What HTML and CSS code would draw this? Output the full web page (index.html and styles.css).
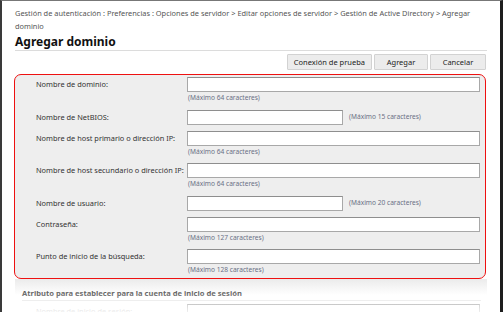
FILE: index.html
```html
<!DOCTYPE html>
<html lang="es">
<head>
  <meta charset="UTF-8">
  <title>Agregar dominio</title>
  <link rel="stylesheet" href="styles.css">
</head>
<body>
  <div class="window">
    <div class="page">
      <div class="breadcrumb">Gestión de autenticación : Preferencias : Opciones de servidor &gt; Editar opciones de servidor &gt; Gestión de Active Directory &gt; Agregar dominio</div>
      <h1 class="title">Agregar dominio</h1>

      <div class="actions">
        <button class="btn">Conexión de prueba</button>
        <button class="btn btn-add">Agregar</button>
        <button class="btn btn-cancel">Cancelar</button>
      </div>

      <!-- Domain settings -->
      <div class="panel">
        <div class="row">
          <label class="label">Nombre de dominio:</label>
          <div class="field">
            <input class="input wide" type="text">
            <div class="hint">(Máximo 64 caracteres)</div>
          </div>
        </div>
        <div class="row">
          <label class="label">Nombre de NetBIOS:</label>
          <div class="field inline">
            <input class="input short" type="text">
            <div class="hint">(Máximo 15 caracteres)</div>
          </div>
        </div>
        <div class="row">
          <label class="label">Nombre de host primario o dirección IP:</label>
          <div class="field">
            <input class="input wide" type="text">
            <div class="hint">(Máximo 64 caracteres)</div>
          </div>
        </div>
        <div class="row">
          <label class="label">Nombre de host secundario o dirección IP:</label>
          <div class="field">
            <input class="input wide" type="text">
            <div class="hint">(Máximo 64 caracteres)</div>
          </div>
        </div>
        <div class="row">
          <label class="label">Nombre de usuario:</label>
          <div class="field inline">
            <input class="input short" type="text">
            <div class="hint">(Máximo 20 caracteres)</div>
          </div>
        </div>
        <div class="row">
          <label class="label">Contraseña:</label>
          <div class="field">
            <input class="input wide" type="password">
            <div class="hint">(Máximo 127 caracteres)</div>
          </div>
        </div>
        <div class="row">
          <label class="label">Punto de inicio de la búsqueda:</label>
          <div class="field">
            <input class="input wide" type="text">
            <div class="hint">(Máximo 128 caracteres)</div>
          </div>
        </div>
      </div>

      <div class="section">
        <h2 class="section-title">Atributo para establecer para la cuenta de inicio de sesión</h2>
        <div class="row row-next">
          <label class="label">Nombre de inicio de sesión:</label>
          <div class="field">
            <input class="input wide" type="text">
          </div>
        </div>
      </div>
    </div>
    <div class="fade"></div>
  </div>
</body>
</html>
```

FILE: styles.css
```css
body {
  margin: 0;
  padding: 0;
  background-color: #fff;
  font-family: "Noto Sans", "Open Sans", sans-serif;
  color: #333;
}

.window {
  position: relative;
  width: 503px;
  height: 312px;
  box-sizing: border-box;
  border-top: 1px solid #777;
  border-left: 2px solid #3a3a3a;
  border-right: 3px solid #1e1e1e;
  overflow: hidden;
  background-color: #fff;
}

.page {
  width: 472px;
  padding: 6px 0 0 13px;
}

.breadcrumb {
  font-size: 7.4px;
  line-height: 13px;
  color: #555;
  padding-right: 10px;
}

.title {
  margin: 0;
  font-size: 12px;
  line-height: 17px;
  font-weight: bold;
  color: #111;
  border-bottom: 1px solid #dcdcdc;
}

.actions {
  display: flex;
  justify-content: flex-end;
  gap: 2px;
  margin-top: 3px;
  padding-right: 1px;
}

.btn {
  height: 16px;
  padding: 0 6px;
  background-color: #ececec;
  border: 1px solid #d2d2d2;
  border-radius: 1px;
  font-family: "Noto Sans", "Open Sans", sans-serif;
  font-size: 7.5px;
  color: #222;
}

.btn-add {
  width: 54px;
}

.btn-cancel {
  width: 56px;
}

.panel {
  margin: 4px 0 0 -1px;
  width: 470px;
  padding: 2px 0 0;
  background-color: #eeeeee;
  border: 1.5px solid #ee1111;
  border-radius: 7px;
}

.row {
  display: flex;
  align-items: flex-start;
  padding: 0 0 6px 21px;
}

.panel .row:last-child {
  padding-bottom: 2px;
}

.label {
  width: 151px;
  font-size: 7.4px;
  line-height: 15px;
  color: #333;
}

.field {
  display: flex;
  flex-direction: column;
}

.field.inline {
  flex-direction: row;
  align-items: center;
  gap: 5px;
}

.input {
  height: 15px;
  box-sizing: border-box;
  margin: 0;
  border: 1px solid #a8a8a8;
  border-top-color: #8e8e8e;
  background-color: #fff;
}

.wide {
  width: 293px;
}

.short {
  width: 156px;
}

.hint {
  font-size: 6.6px;
  line-height: 11.5px;
  color: #6a6f85;
  padding-left: 1px;
}

.section {
  padding-top: 8px;
  background: linear-gradient(#ebebeb, #ffffff 16px);
}

.section-title {
  margin: 0 0 3px 7px;
  font-size: 7.6px;
  line-height: 13px;
  font-weight: bold;
  color: #555;
  border-bottom: 1px solid #e4e4e4;
  width: 459px;
}

.row-next .label {
  color: #aaa;
}

.fade {
  position: absolute;
  left: 0;
  right: 0;
  bottom: 0;
  height: 22px;
  background: linear-gradient(rgba(255, 255, 255, 0), rgba(255, 255, 255, 0.8));
  pointer-events: none;
}
```
